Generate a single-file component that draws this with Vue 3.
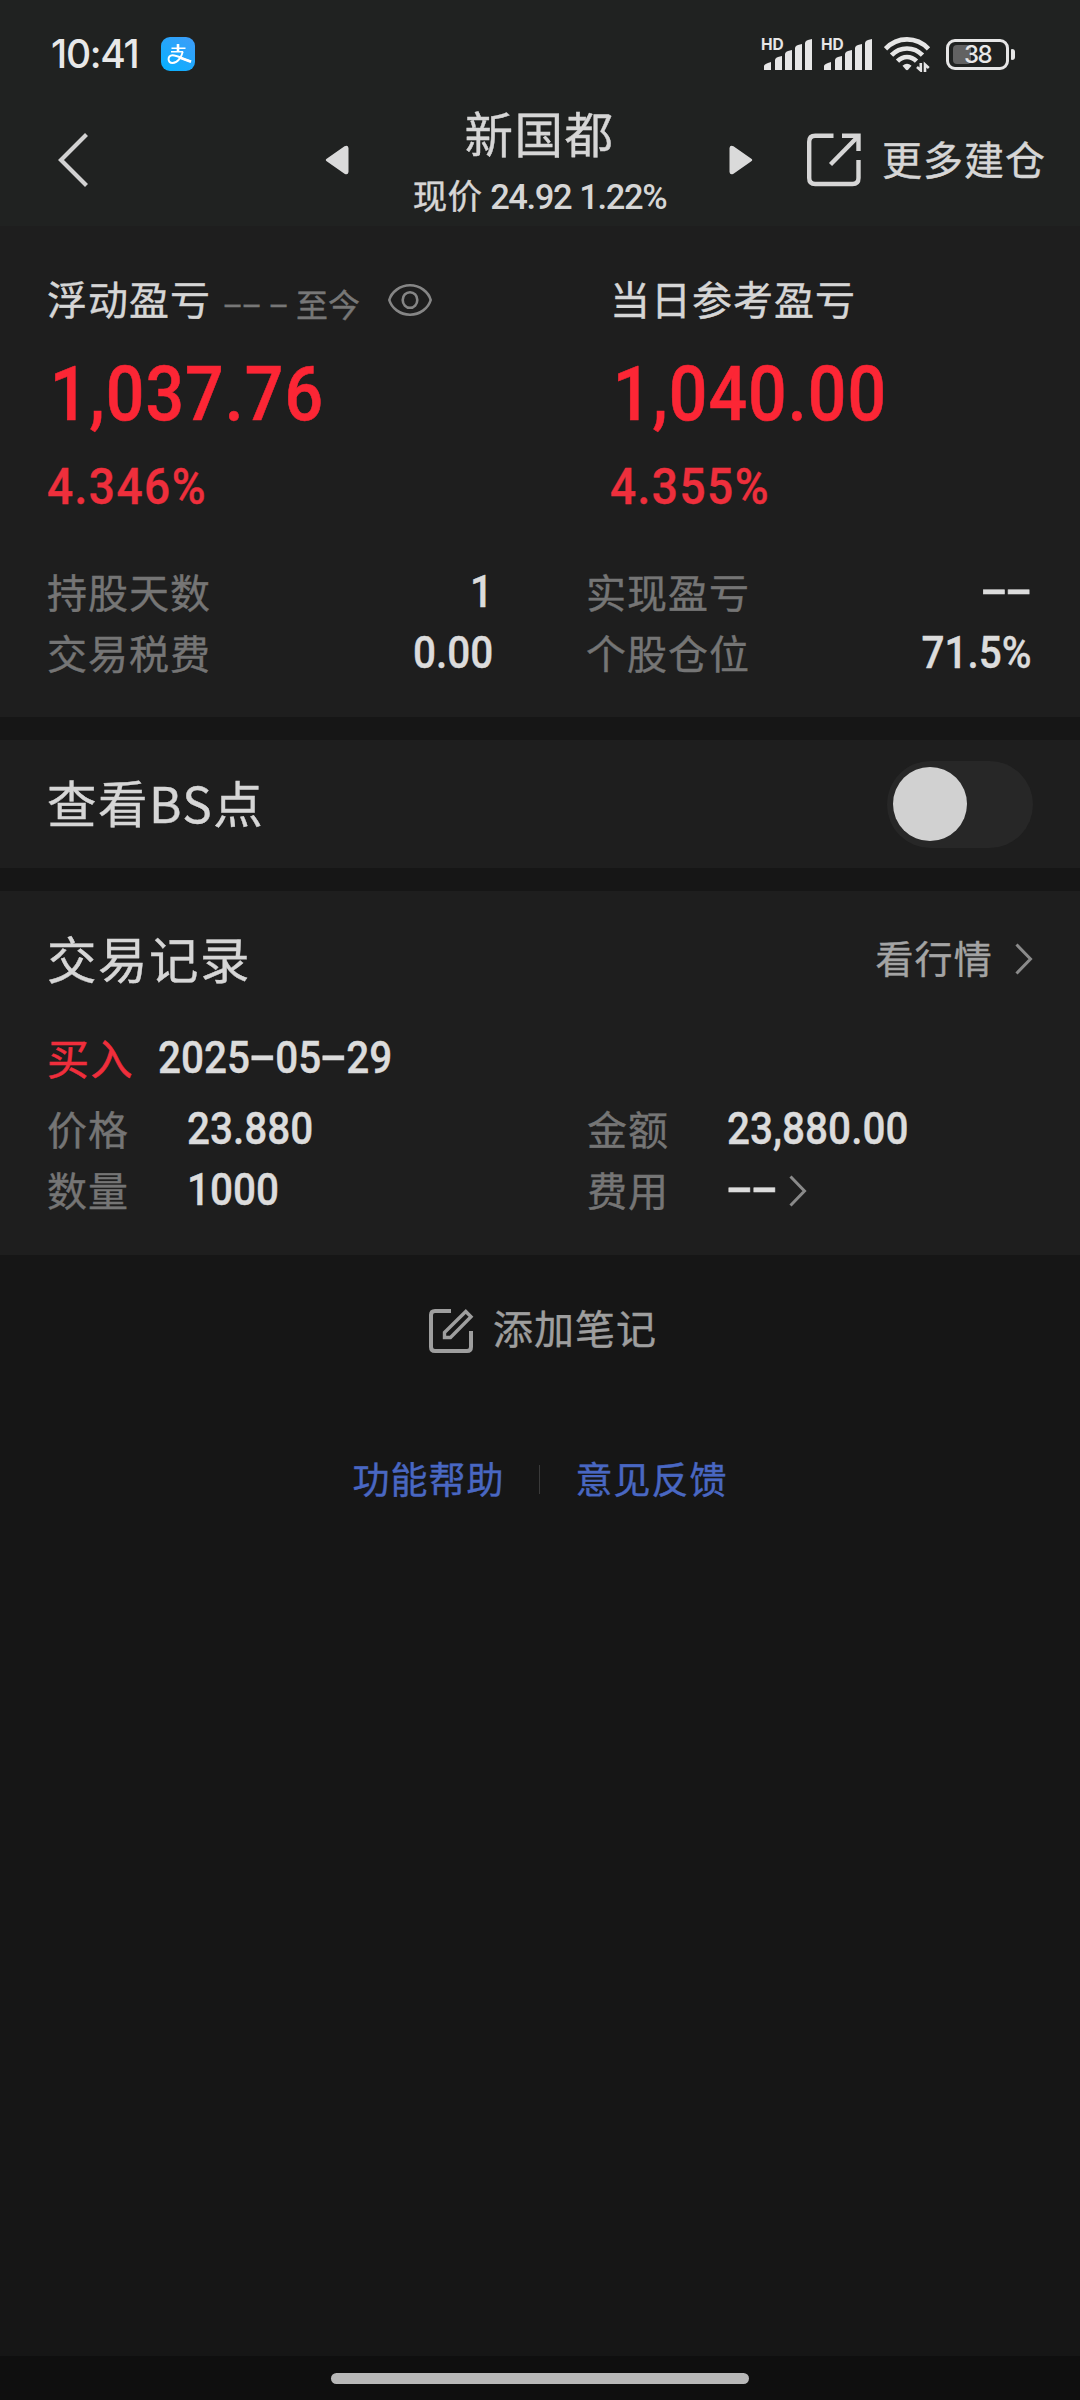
<script setup>
const summary = [
  { value: '1,037.76', rate: '4.346%' },
  { value: '1,040.00', rate: '4.355%' },
]

const stats = [
  [
    { label: '持股天数', value: '1' },
    { label: '交易税费', value: '0.00' },
  ],
  [
    { label: '实现盈亏', value: '--' },
    { label: '个股仓位', value: '71.5%' },
  ],
]

const record = {
  date: '2025-05-29',
  left: [
    { label: '价格', value: '23.880' },
    { label: '数量', value: '1000' },
  ],
  right: [
    { label: '金额', value: '23,880.00' },
    { label: '费用', value: '--', more: true },
  ],
}

const bars = [
  'M0 31v-4q0-2 7-4v8z',
  'M11 31V21q0-3 7-4v14z',
  'M21 31V15q0-3 7-4v20z',
  'M31 31V9q0-3 7-4v26z',
  'M41 31V4q0-3 7-4v31z',
]
</script>

<template>
  <div class="page">
    <header class="top">
      <div class="status">
        <span class="clock">10:41</span>
        <svg class="pay" width="34" height="34" viewBox="0 0 34 34">
          <defs>
            <linearGradient id="pay" x1="1" y1="0" x2="0.3" y2="1">
              <stop offset="0" stop-color="#3f9cf8" />
              <stop offset="1" stop-color="#0cafff" />
            </linearGradient>
          </defs>
          <rect width="34" height="34" rx="9" fill="url(#pay)" />
          <g fill="none" stroke="#fff">
            <path d="M10.5 11.3H24.5M10 14.8H22" stroke-width="1.5" />
            <path d="M17 7V15" stroke-width="2.6" />
            <path d="M21.8 14.6C20.6 20 16.5 26 11.5 26C6.5 26 6 18.3 11.5 18.3C17 18.3 22 22.6 30 24.5" stroke-width="1.9" />
            <path d="M18 20.3L30 24.7" stroke-width="2.8" />
          </g>
        </svg>
        <div class="tray">
          <div v-for="n in 2" :key="n" class="signal">
            <span class="hd">HD</span>
            <svg width="48" height="31" viewBox="0 0 48 31">
              <path v-for="b in bars" :key="b" :d="b" fill="#e6e6e6" />
            </svg>
          </div>
          <svg class="wifi" width="47" height="35" viewBox="0 0 47 35">
            <g fill="none" stroke="#e6e6e6" stroke-width="4.6">
              <path d="M1.5 11.8C13.5 -0.8 32.5 -0.8 44.5 11.8" />
              <path d="M7.5 18.2C16 9.2 30 9.2 38.5 18.2" />
              <path d="M13.5 24.2C19 18.6 27 18.6 32.5 24.2" />
            </g>
            <path d="M18.5 28.8Q23 24.8 27.5 28.8L24.3 32.5Q23 33.8 21.7 32.5Z" fill="#e6e6e6" />
            <path d="M36.8 26V33.5L33 30M41 35V27.5L44.8 31" fill="none" stroke="#e6e6e6" stroke-width="2.6" />
          </svg>
          <div class="battery">
            <span class="charge"></span>
            <span class="level">38</span>
            <span class="tip"></span>
          </div>
        </div>
      </div>

      <nav class="bar">
        <svg class="back" width="32" height="56" viewBox="0 0 32 56">
          <path d="M29.5 2.5L4 28L29.5 53.5" fill="none" stroke="#d2d2d2" stroke-width="4.2" />
        </svg>
        <svg class="prev" width="24" height="30" viewBox="0 0 24 30">
          <path d="M2 13.5L19.5 1.2Q23 -0.5 23.5 3V27Q23 30.5 19.5 28.8L2 16.5Q-0.5 15 2 13.5Z" fill="#dadada" />
        </svg>
        <div class="heading">
          <h1>新国都</h1>
          <p>现价 <span class="num">24.92 1.22%</span></p>
        </div>
        <svg class="next" width="24" height="30" viewBox="0 0 24 30">
          <path d="M22 13.5L4.5 1.2Q1 -0.5 0.5 3V27Q1 30.5 4.5 28.8L22 16.5Q24.5 15 22 13.5Z" fill="#dadada" />
        </svg>
        <svg class="open" width="54" height="54" viewBox="0 0 54 54">
          <g fill="none" stroke="#d6d6d6" stroke-width="4.4">
            <path d="M26.5 2.7H8.2Q2.2 2.7 2.2 8.7V45Q2.2 51 8.2 51H45.5Q51.5 51 51.5 45V27" />
            <path d="M35 2.7H51.5V18" />
            <path d="M23.5 31.5L51 3.5" />
          </g>
        </svg>
        <span class="more">更多建仓</span>
      </nav>
    </header>

    <section class="card overview">
      <div class="pair">
        <div>
          <div class="caption">
            浮动盈亏
            <span class="since"><i class="dash">-</i><i class="dash">-</i><i class="dash wide">-</i>至今</span>
            <svg class="eye" width="46" height="34" viewBox="0 0 46 34">
              <g fill="none" stroke="#868686" stroke-width="2.6">
                <path d="M2.3 17C4.5 9 13 2.3 23 2.3S41.5 9 43.7 17C41.5 25 33 31.7 23 31.7S4.5 25 2.3 17Z" />
                <ellipse cx="23" cy="17" rx="7.3" ry="7.8" />
              </g>
            </svg>
          </div>
          <div class="amount">{{ summary[0].value }}</div>
          <div class="rate">{{ summary[0].rate }}</div>
        </div>
        <div>
          <div class="caption">当日参考盈亏</div>
          <div class="amount">{{ summary[1].value }}</div>
          <div class="rate">{{ summary[1].rate }}</div>
        </div>
      </div>
      <div class="stats">
        <dl v-for="(col, i) in stats" :key="i">
          <div v-for="s in col" :key="s.label" class="row">
            <dt>{{ s.label }}</dt>
            <dd class="num">
              <template v-for="(c, k) in s.value" :key="k"><i v-if="c === '-'" class="dash">-</i><template v-else>{{ c }}</template></template>
            </dd>
          </div>
        </dl>
      </div>
    </section>

    <section class="card points">
      <h2>查看BS点</h2>
      <span class="toggle"><span class="knob"></span></span>
    </section>

    <section class="card records">
      <div class="records-head">
        <h2>交易记录</h2>
        <span class="quote">看行情</span>
        <svg class="chevron" width="18" height="32" viewBox="0 0 18 32">
          <path d="M1.5 1.5L15.5 16L1.5 30.5" fill="none" stroke="#8a8a8a" stroke-width="3" />
        </svg>
      </div>
      <div class="trade">
        <span class="side">买入</span>
        <span class="num"><template v-for="(c, k) in record.date" :key="k"><i v-if="c === '-'" class="dash">-</i><template v-else>{{ c }}</template></template></span>
      </div>
      <div class="details">
        <dl v-for="(col, i) in [record.left, record.right]" :key="i">
          <div v-for="s in col" :key="s.label" class="row">
            <dt>{{ s.label }}</dt>
            <dd class="num">
              <template v-for="(c, k) in s.value" :key="k"><i v-if="c === '-'" class="dash">-</i><template v-else>{{ c }}</template></template>
            </dd>
            <svg v-if="s.more" class="chevron" width="18" height="32" viewBox="0 0 18 32">
              <path d="M1.5 1.5L15.5 16L1.5 30.5" fill="none" stroke="#8a8a8a" stroke-width="3" />
            </svg>
          </div>
        </dl>
      </div>
    </section>

    <div class="note">
      <svg width="46" height="46" viewBox="0 0 46 46">
        <g fill="none" stroke="#9e9e9e" stroke-width="4">
          <path d="M23 3H7Q3 3 3 7V39Q3 43 7 43H39Q43 43 43 39V23" />
          <path d="M37.8 3.5L43 8.8L22.5 29.5H16.5V24.5Z" stroke-width="3.4" />
        </g>
      </svg>
      <span>添加笔记</span>
    </div>

    <div class="links">
      <a>功能帮助</a>
      <span class="sep"></span>
      <a>意见反馈</a>
    </div>

    <footer class="gesture"><span></span></footer>
  </div>
</template>

<style>
body {
  margin: 0;
  background: #161616;
}
</style>

<style scoped>
.page {
  display: flex;
  flex-direction: column;
  width: 1080px;
  height: 2400px;
  overflow: hidden;
  background: #161616;
  color: #d6d6d6;
  font-family: 'Noto Sans CJK SC', sans-serif;
  font-size: 40px;
  letter-spacing: 1px;
  white-space: nowrap;
  -webkit-text-stroke: 0.4px currentColor;
}
h1, h2, p, dl, dd {
  margin: 0;
  font-weight: 400;
}
.top {
  height: 226px;
  background: #202221;
}
.status {
  display: flex;
  align-items: center;
  height: 94px;
  padding: 14px 65px 0 51px;
  box-sizing: border-box;
  -webkit-text-stroke: 0;
}
.clock {
  width: 110px;
  font: 500 39px/50px Inter, sans-serif;
  letter-spacing: -1.3px;
  color: #e8e8e8;
}
.tray {
  display: flex;
  align-items: center;
  margin-left: auto;
}
.signal {
  position: relative;
  display: flex;
  width: 58px;
  height: 31px;
  margin-right: 2px;
}
.signal svg {
  margin-left: 10px;
}
.hd {
  position: absolute;
  left: 7px;
  top: -2px;
  font: 700 15.5px/16px Inter, sans-serif;
  letter-spacing: 0;
  color: #e6e6e6;
}
.wifi {
  margin-left: 10px;
}
.battery {
  position: relative;
  display: flex;
  align-items: center;
  justify-content: center;
  width: 63px;
  height: 31px;
  margin: 0 6px 0 15px;
  box-sizing: border-box;
  border: 3px solid #e6e6e6;
  border-radius: 9px;
}
.charge {
  position: absolute;
  left: 4px;
  top: 3px;
  width: 18px;
  height: 19px;
  border-radius: 4px;
  background: #626262;
}
.level {
  position: relative;
  font: 500 24px/25px Inter, sans-serif;
  letter-spacing: -1.5px;
  color: #e8e8e8;
}
.tip {
  position: absolute;
  right: -9px;
  top: 7px;
  width: 4px;
  height: 11px;
  border-radius: 1px 3px 3px 1px;
  background: #e6e6e6;
}
.bar {
  display: flex;
  align-items: center;
  height: 132px;
}
.back {
  margin-left: 57px;
}
.prev {
  margin-left: 236px;
}
.heading {
  width: 380px;
  height: 132px;
  padding: 9px 0 0 1px;
  box-sizing: border-box;
  text-align: center;
}
.heading h1 {
  font-size: 48.5px;
  line-height: 58px;
  letter-spacing: 1.5px;
}
.heading p {
  font-size: 34.5px;
  line-height: 67px;
  letter-spacing: 0.2px;
}
.num {
  font-family: Roboto, sans-serif;
  font-weight: 500;
  -webkit-text-stroke: 0;
}
.heading .num {
  letter-spacing: -1.4px;
  word-spacing: 1px;
}
.open {
  margin-left: 54px;
}
.more {
  margin-left: 21px;
  line-height: 60px;
  padding-bottom: 4px;
}
.card {
  box-sizing: border-box;
  background: #1e1e1e;
}
.overview {
  height: 491px;
  padding: 44px 47px 0;
}
.pair {
  display: grid;
  grid-template-columns: 563px 1fr;
}
.caption {
  display: flex;
  height: 56px;
  line-height: 57px;
}
.since {
  margin: 5px 0 0 12px;
  font-size: 32px;
  letter-spacing: 0;
  color: #777;
}
.since .dash {
  width: 19px;
}
.since .dash.wide {
  width: 35px;
}
.eye {
  margin: 13px 0 0 27px;
}
.amount,
.rate {
  transform-origin: left center;
}
.amount {
  margin-top: 23px;
  padding-left: 3px;
  color: #fc2635;
  font: 500 75.5px/90px Roboto, sans-serif;
  letter-spacing: 1.2px;
  transform: scaleX(0.9);
  -webkit-text-stroke: 0.6px currentColor;
}
.rate {
  margin-top: 18px;
  color: #ee2f3c;
  font: 500 50px/60px Roboto, sans-serif;
  letter-spacing: 1.6px;
  transform: scaleX(0.92);
}
.stats {
  display: grid;
  grid-template-columns: 446px 446px;
  column-gap: 93px;
  margin-top: 44px;
}
.row {
  display: flex;
  height: 61px;
  line-height: 61px;
}
.row dt {
  color: #757575;
}
.row .num,
.trade .num {
  padding-top: 1px;
  font-size: 44px;
  letter-spacing: 0;
  color: #dcdcdc;
  transform: scaleX(0.92);
  transform-origin: left center;
  -webkit-text-stroke: 0.4px currentColor;
}
.stats .row .num {
  margin-left: auto;
  transform-origin: right center;
}
.dash {
  display: inline-block;
  width: 27.3px;
  font-family: Roboto, sans-serif;
  font-style: normal;
  text-align: center;
  letter-spacing: 0;
  transform: translateY(-2px) scaleX(2);
}
.points {
  display: flex;
  align-items: center;
  justify-content: space-between;
  height: 128px;
  margin-top: 23px;
  padding: 0 47px;
}
h2 {
  font-size: 49.5px;
  line-height: 70px;
  letter-spacing: 1.5px;
}
.points h2 {
  padding-bottom: 4px;
}
.toggle {
  width: 146px;
  height: 87px;
  padding: 6px;
  box-sizing: border-box;
  border-radius: 44px;
  background: #272727;
}
.knob {
  display: block;
  width: 74px;
  height: 74px;
  border-radius: 50%;
  background: #d1d1d1;
}
.records {
  height: 364px;
  margin-top: 23px;
  padding: 32px 47px 0;
}
.records-head {
  display: flex;
  align-items: center;
  height: 70px;
}
.quote {
  margin-left: auto;
  padding-bottom: 3px;
  font-size: 38px;
  letter-spacing: 1.2px;
  color: #a4a4a4;
}
.records-head .chevron {
  margin: 2px 0 0 22px;
}
.trade {
  display: flex;
  margin-top: 34px;
  line-height: 60px;
}
.side {
  width: 111px;
  font-size: 42px;
  letter-spacing: 1.4px;
  color: #f02e3c;
  -webkit-text-stroke: 0.6px currentColor;
}
.details {
  display: grid;
  grid-template-columns: 540px 1fr;
  margin-top: 10px;
}
.details dt {
  width: 140px;
}
.details .chevron {
  margin: 16px 0 0 7px;
}
.note {
  display: flex;
  align-items: center;
  justify-content: center;
  margin-top: 42px;
  height: 60px;
  color: #9e9e9e;
}
.note svg {
  margin: 8px 19px 0 5px;
}
.note span {
  line-height: 60px;
}
.links {
  display: flex;
  align-items: center;
  justify-content: center;
  margin-top: 96px;
  line-height: 50px;
  font-size: 37px;
  letter-spacing: 1px;
  color: #4967c2;
}
.sep {
  width: 1px;
  height: 29px;
  margin: 2px 36px 0 34px;
  background: #3a3a3a;
}
.gesture {
  display: flex;
  justify-content: center;
  height: 44px;
  margin-top: auto;
  padding-top: 17px;
  box-sizing: border-box;
  background: #0f0f0f;
}
.gesture span {
  width: 418px;
  height: 11px;
  border-radius: 6px;
  background: #b8b8b8;
}
</style>
